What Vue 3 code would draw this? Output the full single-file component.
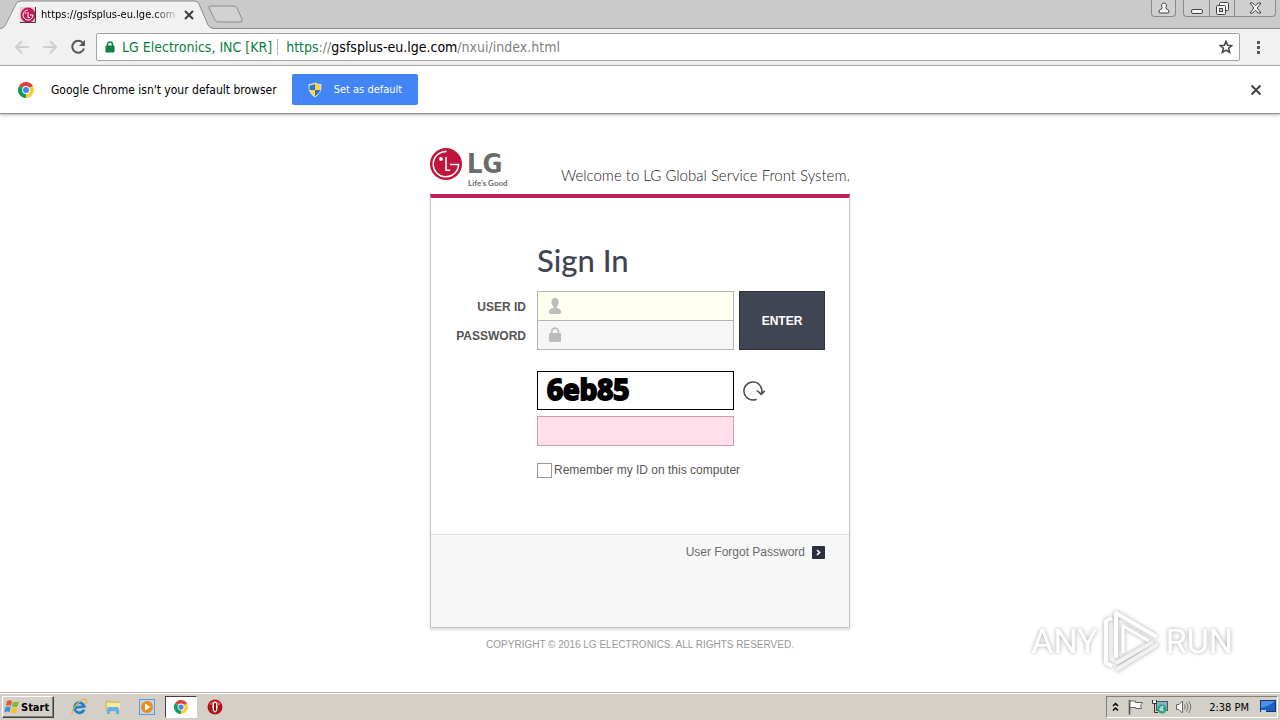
<template>
  <div class="screen">
    <header class="browser">
      <div class="tab-strip">
        <div class="tab">
          <svg class="tab-shape" width="214" height="29" viewBox="0 0 214 29" aria-hidden="true">
            <path d="M0 29 C4 28 5 26 6 24 L16 4 Q17 1 21 1 H194 Q198 1 199 4 L208 25 Q209 28 214 29 Z" fill="#f1f1f1" />
            <path d="M0 28.5 C4 28 5 26 6 24 L16 4 Q17 1 21 1 H194 Q198 1 199 4 L208 25 Q209 28 214 28.5" fill="none" stroke="#8d8d8d" />
          </svg>
          <svg class="favicon" width="16" height="16" viewBox="0 0 16 16" aria-hidden="true">
            <rect width="16" height="16" fill="#e9c9d3" />
            <circle cx="8" cy="8" r="7.4" fill="#c2185b" />
            <path d="M8 3 A5 5 0 1 0 13 8 H10 M8 5 V10.5 H10" fill="none" stroke="#fff" />
            <circle cx="5.6" cy="6" r="0.8" fill="#fff" />
            <path d="M15.5 0 V15.5 H0" fill="none" stroke="#4b3540" />
          </svg>
          <span class="tab-title">https://gsfsplus-eu.lge.com</span>
          <button class="icon-btn tab-close" aria-label="Close tab">
            <svg width="10" height="10" viewBox="0 0 10 10"><path d="M1 1 L9 9 M9 1 L1 9" stroke="#3c3c3c" stroke-width="2" /></svg>
          </button>
        </div>
        <button class="icon-btn new-tab" aria-label="New tab">
          <svg width="36" height="18" viewBox="0 0 36 18">
            <path d="M3 1 H25 Q28 1 29 3 L34 14 Q35 17 32 17 H11 Q8 17 7 15 L1 3 Q0 1 3 1 Z" fill="#d2d2d2" stroke="#8d8d8d" />
          </svg>
        </button>
        <div class="window-controls">
          <button class="win-btn user" aria-label="User">
            <svg width="12" height="12" viewBox="0 0 12 12"><path d="M6 1 a2.4 2.6 0 0 1 1.8 4.4 Q7.6 6.5 9 7 Q11 7.6 11 10 Q11 11 10 11 H2 Q1 11 1 10 Q1 7.6 3 7 Q4.4 6.5 4.2 5.4 A2.4 2.6 0 0 1 6 1 Z" fill="#f5f5f5" stroke="#444" /></svg>
          </button>
          <div class="win-group">
            <button class="win-btn" aria-label="Minimize">
              <svg width="12" height="14" viewBox="0 0 12 14"><rect x="0.5" y="8.5" width="11" height="4" rx="1.5" fill="#f5f5f5" stroke="#444" /></svg>
            </button>
            <button class="win-btn" aria-label="Restore">
              <svg width="13" height="14" viewBox="0 0 13 14">
                <rect x="3.5" y="1.5" width="9" height="8" rx="1" fill="#f5f5f5" stroke="#444" />
                <rect x="0.5" y="4.5" width="9" height="9" rx="1" fill="#f5f5f5" stroke="#444" />
                <rect x="3.5" y="7.5" width="3" height="3" fill="#ccc" stroke="#444" />
              </svg>
            </button>
            <button class="win-btn wide" aria-label="Close">
              <svg width="13" height="12" viewBox="0 0 13 12"><path d="M1 1 H4 L6.5 3.8 L9 1 H12 L8.2 6 L12 11 H9 L6.5 8.2 L4 11 H1 L4.8 6 Z" fill="#f5f5f5" stroke="#444" /></svg>
            </button>
          </div>
        </div>
      </div>

      <div class="toolbar">
        <button class="icon-btn" aria-label="Back">
          <svg width="20" height="20" viewBox="0 0 20 20"><path d="M17 10 H4 M10 4 L4 10 L10 16" fill="none" stroke="#cfcfcf" stroke-width="2" /></svg>
        </button>
        <button class="icon-btn" aria-label="Forward">
          <svg width="20" height="20" viewBox="0 0 20 20"><path d="M3 10 H16 M10 4 L16 10 L10 16" fill="none" stroke="#cfcfcf" stroke-width="2" /></svg>
        </button>
        <button class="icon-btn" aria-label="Reload">
          <svg width="20" height="20" viewBox="0 0 20 20"><path d="M15 6 A6 6 0 1 0 16 11.5" fill="none" stroke="#555" stroke-width="2" /><path d="M17 3 V9 H11 Z" fill="#555" /></svg>
        </button>
        <div class="omnibox">
          <svg class="lock" width="10" height="12" viewBox="0 0 10 12" aria-hidden="true">
            <rect x="0.5" y="4.5" width="9" height="7" rx="1" fill="#0b8043" />
            <path d="M2.5 5 V3.5 a2.5 2.5 0 0 1 5 0 V5" fill="none" stroke="#0b8043" stroke-width="1.4" />
          </svg>
          <span class="issuer">LG Electronics, INC [KR]</span>
          <span class="url"><span class="scheme">https</span><span class="dim">://</span>gsfsplus-eu.lge.com<span class="dim">/nxui/index.html</span></span>
          <button class="icon-btn star" aria-label="Bookmark this page">
            <svg width="14" height="14" viewBox="0 0 14 14"><path d="M7 1.4 L8.6 5.3 L12.8 5.6 L9.6 8.3 L10.6 12.4 L7 10.2 L3.4 12.4 L4.4 8.3 L1.2 5.6 L5.4 5.3 Z" fill="none" stroke="#444" stroke-width="1.5" /></svg>
          </button>
        </div>
        <button class="icon-btn" aria-label="Menu">
          <svg width="20" height="20" viewBox="0 0 20 20" fill="#555"><rect x="9" y="4" width="3" height="3" /><rect x="9" y="9" width="3" height="3" /><rect x="9" y="14" width="3" height="3" /></svg>
        </button>
      </div>

      <div class="infobar">
        <svg width="16" height="16" viewBox="0 0 16 16" aria-hidden="true">
          <path d="M8 8 L1.07 4 A8 8 0 0 1 14.93 4 Z" fill="#db4437" />
          <path d="M8 8 L14.93 4 A8 8 0 0 1 8 16 Z" fill="#ffcd40" />
          <path d="M8 8 L8 16 A8 8 0 0 1 1.07 4 Z" fill="#0f9d58" />
          <path d="M8 4.3 H15.1 L14.9 4 H8 Z" fill="#db4437" />
          <circle cx="8" cy="8" r="3.9" fill="#fff" />
          <circle cx="8" cy="8" r="3" fill="#4285f4" />
        </svg>
        <span class="info-text">Google Chrome isn't your default browser</span>
        <button class="default-btn">
          <svg width="14" height="16" viewBox="0 0 14 16" aria-hidden="true">
            <path d="M7 1 Q10 2.6 13 2.6 Q13.6 11 7 15 Q0.4 11 1 2.6 Q4 2.6 7 1 Z" fill="#ffd42e" stroke="#dfe8f2" />
            <path d="M7 2 V8 H1.8 Q1.4 5.5 1.7 3.4 Q4.5 3.4 7 2 Z M7 8 H12.2 Q11.4 11.6 7 14.2 Z" fill="#2a74c9" />
          </svg>
          Set as default
        </button>
        <button class="icon-btn info-close" aria-label="Dismiss">
          <svg width="12" height="12" viewBox="0 0 12 12"><path d="M1.5 1.5 L10.5 10.5 M10.5 1.5 L1.5 10.5" stroke="#444" stroke-width="2" /></svg>
        </button>
      </div>
    </header>

    <main class="page">
      <div class="login">
        <div class="login-head">
          <div class="logo">
            <svg width="32" height="32" viewBox="0 0 32 32" aria-hidden="true">
              <circle cx="16" cy="16" r="16" fill="#c0143c" />
              <path d="M16.5 3.4 A12.7 12.7 0 1 0 28.6 16.6 H20" fill="none" stroke="#fff" stroke-width="1.5" />
              <path d="M16 9 V22.3 H20.2" fill="none" stroke="#fff" stroke-width="1.6" />
              <circle cx="11" cy="11" r="1.9" fill="#fff" />
            </svg>
            <div class="logo-text">
              <strong>LG</strong>
              <span>Life's Good</span>
            </div>
          </div>
          <p class="welcome">Welcome to LG Global Service Front System.</p>
        </div>

        <div class="card">
          <form class="form" @submit.prevent>
            <h1>Sign In</h1>

            <div class="labels">
              <label for="uid">USER ID</label>
              <label for="pwd">PASSWORD</label>
            </div>
            <div class="fields">
              <div class="field user-field">
                <svg width="14" height="16" viewBox="0 0 14 16" aria-hidden="true"><path d="M7 0 C9.6 0 10.7 1.8 10.5 4.2 C10.4 6.2 9.7 7.6 8.7 8.4 V10 Q13 10.8 13 13.5 V14.5 Q13 16 11 16 H3 Q1 16 1 14.5 V13.5 Q1 10.8 5.3 10 V8.4 C4.3 7.6 3.6 6.2 3.5 4.2 C3.3 1.8 4.4 0 7 0 Z" fill="#bcbcbc" /></svg>
                <input id="uid" v-model="userId" type="text" />
              </div>
              <div class="field">
                <svg width="14" height="16" viewBox="0 0 14 16" aria-hidden="true"><rect x="1" y="6" width="12" height="9" rx="1" fill="#bcbcbc" /><path d="M3.7 7 V4.5 a3.3 3.3 0 0 1 6.6 0 V7" fill="none" stroke="#bcbcbc" stroke-width="1.7" /></svg>
                <input id="pwd" v-model="password" type="password" />
              </div>
            </div>
            <button class="enter" type="submit">ENTER</button>

            <div class="captcha">6eb85</div>
            <button class="icon-btn refresh" type="button" aria-label="Refresh code">
              <svg width="24" height="22" viewBox="0 0 24 22"><path d="M14.6 19.2 A9 9 0 1 1 19.4 14" fill="none" stroke="#4d4d55" stroke-width="1.5" /><path d="M15 10.5 L19.2 14.4 L22.8 10.8" fill="none" stroke="#4d4d55" stroke-width="1.7" /></svg>
            </button>

            <input v-model="code" class="code" type="text" aria-label="Security code" />

            <div class="remember">
              <input id="remember" v-model="remember" type="checkbox" />
              <label for="remember">Remember my ID on this computer</label>
            </div>
          </form>

          <div class="card-foot">
            <a href="#">
              User Forgot Password
              <svg width="13" height="13" viewBox="0 0 13 13" aria-hidden="true"><rect width="13" height="13" rx="1" fill="#2b2f3e" /><path d="M5 4 L7.6 6.5 L5 9" fill="none" stroke="#fff" stroke-width="1.6" /></svg>
            </a>
          </div>
        </div>
        <p class="copyright">COPYRIGHT © 2016 LG ELECTRONICS. ALL RIGHTS RESERVED.</p>
      </div>
    </main>

    <div class="watermark">
      <span>ANY</span>
      <svg width="60" height="64" viewBox="0 0 60 64" aria-hidden="true">
        <g fill="none" stroke="#fff" stroke-width="4" stroke-linejoin="round">
          <path d="M10 9 L4 12 V54 L10 57" />
          <path d="M14 49 V4 L55 28" />
          <path d="M21 44 V17 L47 32" stroke-width="3" />
          <path d="M14 54 L51 33" stroke="#f1f1f1" />
          <path d="M14 61 L56 35" stroke="#f1f1f1" />
        </g>
      </svg>
      <span>RUN</span>
    </div>

    <footer class="taskbar">
      <button class="start">
        <svg width="16" height="16" viewBox="0 0 16 16" aria-hidden="true">
          <path d="M3 2 Q5.5 0.5 8 2 L7 7 Q4.5 5.6 1.8 7 Z" fill="#e8592b" />
          <path d="M9 2.4 Q12 3.8 15 2.2 L13.6 7.4 Q11 8.6 8 7.4 Z" fill="#7db93c" />
          <path d="M1.5 8 Q4.2 6.8 6.8 8 L5.6 13 Q3 11.8 0.2 13.2 Z" fill="#3f8fdd" />
          <path d="M7.8 8.4 Q10.6 9.8 13.3 8.5 L12 13.6 Q9.4 15 6.6 13.5 Z" fill="#f8c22b" />
        </svg>
        Start
      </button>
      <div class="quick">
        <button class="task" aria-label="Internet Explorer">
          <svg width="18" height="18" viewBox="0 0 18 18">
            <path d="M14 11.6 A5 5 0 1 1 14.2 8.4 L5 9.6" fill="none" stroke="#1f7fd0" stroke-width="2.8" />
            <path d="M2.6 16 C-1 13 12 -1 16.5 2 Q17.5 3.2 15.5 6" fill="none" stroke="#dfb53a" stroke-width="1.3" />
          </svg>
        </button>
        <button class="task" aria-label="Explorer">
          <svg width="18" height="18" viewBox="0 0 18 18">
            <path d="M2 3 H7 L8 4 H15 V13 H2 Z" fill="#e9cf6b" stroke="#c8a94a" stroke-width="0.6" />
            <path d="M3 5 H16 V12 H3 Z" fill="#f8e9a4" />
            <path d="M3 16 V11 Q3 9 5 9 H13 Q15 9 15 11 V16 H12 V13 H6 V16 Z" fill="#62b3e4" />
          </svg>
        </button>
        <button class="task" aria-label="Media Player">
          <svg width="18" height="18" viewBox="0 0 18 18">
            <rect x="1.5" y="1.5" width="15" height="15" fill="#b9d9f3" stroke="#5e9ccf" />
            <circle cx="9" cy="9" r="6" fill="#f08a1d" />
            <path d="M7 5.5 L12.5 9 L7 12.5 Z" fill="#fff" />
          </svg>
        </button>
        <button class="task active" aria-label="Chrome">
          <svg width="14" height="14" viewBox="0 0 16 16">
            <path d="M8 8 L1.07 4 A8 8 0 0 1 14.93 4 Z" fill="#db4437" />
            <path d="M8 8 L14.93 4 A8 8 0 0 1 8 16 Z" fill="#ffcd40" />
            <path d="M8 8 L8 16 A8 8 0 0 1 1.07 4 Z" fill="#0f9d58" />
            <circle cx="8" cy="8" r="3.9" fill="#fff" />
            <circle cx="8" cy="8" r="3" fill="#4285f4" />
          </svg>
        </button>
        <button class="task" aria-label="Opera">
          <svg width="18" height="18" viewBox="0 0 18 18">
            <circle cx="9" cy="9" r="7.5" fill="#b5121b" />
            <path d="M3 6 Q9 0 15 6 Q9 9 3 6 Z" fill="#de5a5a" />
            <ellipse cx="9" cy="9" rx="2.6" ry="5.4" fill="#fff" />
            <rect x="8" y="5" width="2" height="8" rx="1" fill="#9c0a14" />
          </svg>
        </button>
      </div>
      <div class="tray">
        <svg width="9" height="12" viewBox="0 0 9 12" aria-hidden="true"><path d="M2 5 L4.5 2.5 L7 5 M2 9.5 L4.5 7 L7 9.5" fill="none" stroke="#000" stroke-width="1.5" /></svg>
        <svg width="17" height="16" viewBox="0 0 17 16" aria-hidden="true"><path d="M2.5 1 V15.5" stroke="#555" stroke-width="1.6" /><path d="M3 2 H8.5 V3.5 H15.5 L13.5 6.5 L14.5 9.5 H9 V8.5 H3 Z" fill="#fff" stroke="#666" /></svg>
        <svg width="17" height="16" viewBox="0 0 17 16" aria-hidden="true">
          <rect x="5.5" y="2.5" width="11" height="9" fill="#77b6c7" stroke="#555" />
          <path d="M1.5 1 V4.5 H5.5 V1 M3.5 4.5 V13.5 H7" fill="none" stroke="#333" />
          <rect x="2" y="2" width="3" height="2" fill="#fff" />
          <circle cx="11" cy="10" r="4.5" fill="#2f9d8c" />
          <path d="M8 10 Q10 6 13 7 Q11 9 13 12 Q9 13 8 10 Z" fill="#a9dcc9" />
        </svg>
        <svg width="17" height="16" viewBox="0 0 17 16" aria-hidden="true">
          <path d="M1.5 5.5 H4 L7.5 2 V14 L4 10.5 H1.5 Z" fill="#fff" stroke="#666" />
          <path d="M9.5 5.5 Q11 8 9.5 10.5 M11.5 3.5 Q14.5 8 11.5 12.5 M13.6 2 Q18 8 13.6 14" fill="none" stroke="#777" />
        </svg>
        <time>2:38 PM</time>
        <svg width="16" height="14" viewBox="0 0 16 14" aria-hidden="true">
          <rect x="0.5" y="0.5" width="15" height="11" fill="#1f5fbf" stroke="#16356b" />
          <path d="M1 8 Q8 7 15 1 V1 H1 Z" fill="#4b92e0" />
          <rect x="1" y="10" width="5" height="2" fill="#bcd6f2" />
        </svg>
      </div>
    </footer>
  </div>
</template>

<script setup>
import { ref } from 'vue';

const userId = ref('');
const password = ref('');
const code = ref('');
const remember = ref(false);
</script>

<style>
body {
  margin: 0;
  background: #fff;
}
</style>

<style scoped>
* {
  box-sizing: border-box;
}

.screen {
  display: flex;
  flex-direction: column;
  min-height: 100vh;
  font-family: "Liberation Sans", Arial, sans-serif;
  font-size: 12px;
}

svg {
  display: block;
  flex: none;
}

button {
  font-family: inherit;
  cursor: pointer;
}

.icon-btn {
  padding: 0;
  border: none;
  background: none;
}

/* browser */
.browser {
  font-family: "DejaVu Sans Condensed", "DejaVu Sans", sans-serif;
}

.tab-strip {
  display: flex;
  height: 29px;
  background: #cacaca;
  border-bottom: 1px solid #8d8d8d;
}

.tab {
  position: relative;
  display: flex;
  align-items: center;
  width: 208px;
  height: 29px;
  padding: 0 14px 0 20px;
}

.tab-shape {
  position: absolute;
  left: 0;
  top: 0;
}

.favicon,
.tab-title,
.tab-close {
  position: relative;
}

.tab-title {
  flex: 1;
  margin: 0 4px 0 5px;
  overflow: hidden;
  white-space: nowrap;
  font-size: 11px;
  color: #000;
  mask-image: linear-gradient(to right, #000 80%, transparent);
}

.new-tab {
  align-self: center;
}

.window-controls {
  display: flex;
  align-items: flex-start;
  gap: 7px;
  margin-left: auto;
  padding-right: 4px;
}

.win-btn {
  display: flex;
  align-items: center;
  justify-content: center;
  width: 25px;
  height: 16px;
  padding: 0;
  border: none;
  background: none;
}

.win-btn.user,
.win-group {
  border: 1px solid #8a8a8a;
  border-top: none;
  border-radius: 0 0 4px 4px;
  height: 17px;
  background: #cfcfcf;
}

.win-group {
  display: flex;
}

.win-group .win-btn + .win-btn {
  border-left: 1px solid #8a8a8a;
}

.win-btn.wide {
  width: 41px;
}

.toolbar {
  display: flex;
  align-items: center;
  gap: 8px;
  height: 37px;
  padding: 0 12px;
  background: #f1f1f1;
  border-bottom: 1px solid #b0b0b0;
}

.omnibox {
  display: flex;
  flex: 1;
  align-items: center;
  height: 28px;
  padding: 0 6px 0 8px;
  border: 1px solid #a3a3a3;
  border-radius: 2px;
  background: #fff;
  font-size: 14px;
  white-space: nowrap;
}

.issuer {
  margin-left: 7px;
  padding-right: 5px;
  border-right: 1px solid #b5b5b5;
  line-height: 16px;
  color: #0b8043;
}

.url {
  margin-left: 8px;
  color: #000;
}

.scheme {
  color: #0b8043;
}

.dim {
  color: #808080;
}

.star {
  margin-left: auto;
}

.infobar {
  display: flex;
  align-items: center;
  height: 48px;
  padding: 0 18px;
  background: #fff;
  border-bottom: 1px solid #8f8f8f;
  box-shadow: 0 1px 3px rgba(0, 0, 0, 0.3);
  font-size: 12px;
}

.info-text {
  margin: 0 15px 0 17px;
  color: #000;
}

.default-btn {
  display: flex;
  align-items: center;
  gap: 12px;
  height: 31px;
  padding: 0 16px;
  border: none;
  border-radius: 2px;
  background: #4285f4;
  color: #fff;
  font-size: 11px;
}

.info-close {
  margin-left: auto;
}

/* login page */
.page {
  display: flex;
  flex: 1;
  justify-content: center;
  padding-top: 34px;
}

.login {
  width: 100%;
  max-width: 420px;
}

.login-head {
  display: flex;
  align-items: flex-end;
  justify-content: space-between;
  height: 40px;
  margin-bottom: 6px;
}

.logo {
  display: flex;
  gap: 5px;
  height: 40px;
}

.logo-text {
  display: flex;
  flex-direction: column;
  color: #6b6b6b;
}

.logo-text strong {
  font-family: "DejaVu Sans Condensed", sans-serif;
  font-size: 27px;
  line-height: 31px;
}

.logo-text span {
  padding-left: 1px;
  font-family: Lato, sans-serif;
  font-size: 8px;
  font-weight: bold;
  line-height: 9px;
}

.welcome {
  margin: 0;
  font-family: Lato, sans-serif;
  font-size: 15px;
  font-weight: 300;
  line-height: 26px;
  color: #222;
}

.card {
  border: 1px solid #c3c3c3;
  border-top: 4px solid #c1205a;
  box-shadow: 0 2px 2px rgba(0, 0, 0, 0.12);
}

.form {
  display: grid;
  grid-template-columns: 1fr 197px 86px;
  column-gap: 5px;
  padding: 42px 24px 56px 0;
}

.form h1 {
  grid-column: 2 / 4;
  margin: 0 0 11px;
  font-family: Lato, sans-serif;
  font-size: 31px;
  font-weight: 500;
  line-height: 40px;
  color: #3f4452;
}

.labels {
  display: flex;
  flex-direction: column;
  height: 59px;
  padding: 2px 6px 0 0;
  text-align: right;
  font-weight: bold;
  line-height: 29px;
  color: #555;
}

.field {
  display: flex;
  align-items: center;
  height: 30px;
  padding-left: 10px;
  border: 1px solid #b3b3b3;
  background: #f6f6f6;
}

.field + .field {
  margin-top: -1px;
}

.user-field {
  background: #fffff0;
}

.field input {
  flex: 1;
  min-width: 0;
  height: 28px;
  padding: 0 8px;
  border: none;
  outline: none;
  background: transparent;
}

.enter {
  border: 1px solid #2c303c;
  background: #404553;
  color: #fff;
  font-size: 12px;
  font-weight: bold;
}

.captcha {
  grid-column: 2;
  height: 39px;
  margin-top: 21px;
  padding-left: 9px;
  border: 1px solid #000;
  font-family: "Open Sans", sans-serif;
  font-size: 28px;
  font-weight: 700;
  line-height: 34px;
  color: #000;
  -webkit-text-stroke: 2px #000;
}

.refresh {
  justify-self: start;
  margin: 21px 0 0 3px;
}

.code {
  grid-column: 2;
  height: 30px;
  margin-top: 6px;
  padding: 0 8px;
  border: 1px solid #d39aae;
  background: #ffdfe9;
}

.remember {
  display: flex;
  grid-column: 2 / 4;
  align-items: center;
  gap: 2px;
  margin-top: 17px;
  line-height: 15px;
  color: #555;
  white-space: nowrap;
}

.remember input {
  appearance: none;
  width: 15px;
  height: 15px;
  margin: 0;
  border: 1px solid #999;
  background: #fff;
}

.remember input:checked {
  background: #404553;
}

.card-foot {
  display: flex;
  align-items: flex-start;
  justify-content: flex-end;
  height: 93px;
  padding: 10px 24px;
  border-top: 1px solid #dcdcdc;
  background: #f7f7f7;
}

.card-foot a {
  display: flex;
  align-items: center;
  gap: 7px;
  color: #6b6b6b;
  text-decoration: none;
}

.copyright {
  margin: 10px 0 0;
  text-align: center;
  font-size: 10px;
  line-height: 14px;
  color: #999;
}

/* watermark */
.watermark {
  position: fixed;
  right: 47px;
  bottom: 47px;
  display: flex;
  align-items: center;
  gap: 4px;
  font-family: Roboto, sans-serif;
  font-size: 34px;
  line-height: 64px;
  color: #fff;
  filter: drop-shadow(0 0 2px rgba(0, 0, 0, 0.35));
  pointer-events: none;
}

/* taskbar */
.taskbar {
  display: flex;
  align-items: center;
  height: 28px;
  padding: 1px 2px 0;
  border-top: 1px solid #b9b6b0;
  box-shadow: inset 0 1px 0 #fff;
  background: #d4d0c8;
  font-family: "DejaVu Sans Condensed", "DejaVu Sans", sans-serif;
}

.start {
  display: flex;
  align-items: center;
  gap: 1px;
  width: 52px;
  height: 22px;
  padding: 0 1px;
  border: 1px solid;
  border-color: #fff #404040 #404040 #fff;
  background: #d4d0c8;
  box-shadow: inset -1px -1px 0 #808080;
  font-size: 11px;
  font-weight: bold;
}

.quick {
  display: flex;
  margin-left: 9px;
  gap: 2px;
}

.task {
  display: flex;
  align-items: center;
  justify-content: center;
  width: 32px;
  height: 22px;
  padding: 0;
  border: none;
  background: none;
}

.task.active {
  border: 1px solid;
  border-color: #404040 #fff #fff #404040;
  background: #fff;
}

.tray {
  display: flex;
  align-items: center;
  gap: 7px;
  height: 22px;
  margin-left: auto;
  padding: 0 1px 0 4px;
  border: 1px solid;
  border-color: #808080 #fff #fff #808080;
}

.tray time {
  margin: 0 4px 0 10px;
  font-size: 11px;
}
</style>
